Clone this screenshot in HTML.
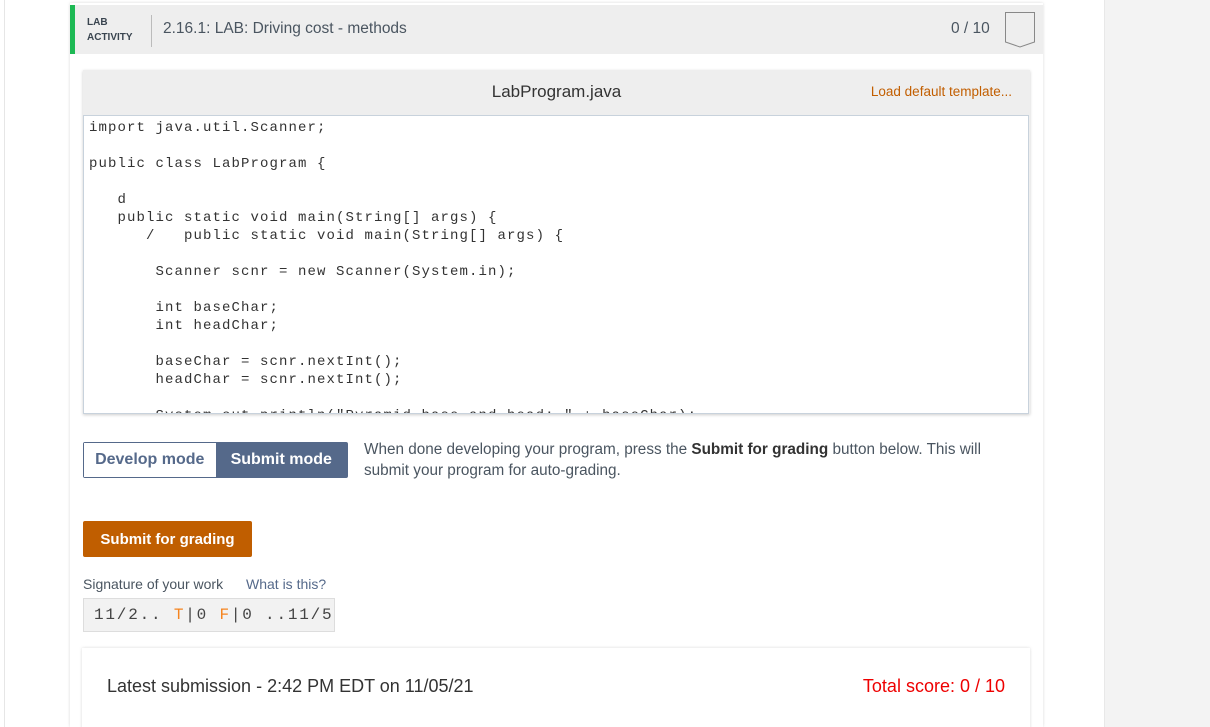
<!DOCTYPE html>
<html style="overflow:hidden"><head><meta charset="utf-8"><style>
*{box-sizing:border-box;margin:0;padding:0}
html,body{width:1210px;height:727px;overflow:hidden}
body{background:#fff;font-family:"Liberation Sans",sans-serif;color:#333;position:relative}
.lstrip{position:absolute;left:4px;top:0;width:1px;height:727px;background:#e6e6e6}
.rgray{position:absolute;left:1104px;top:0;width:106px;height:727px;background:#f3f3f3;border-left:1px solid #e8e8e8}
.card{position:absolute;left:70px;top:3px;width:973px;height:724px;background:#fff;box-shadow:0 0 3px rgba(0,0,0,.15)}
.hdr{position:absolute;left:0;top:2px;width:973px;height:49px;background:#eeeeee;border-left:5px solid #1db954}
.lab{position:absolute;left:12px;top:10px;font-size:10px;font-weight:bold;color:#3a4550;line-height:15px}
.sep{position:absolute;left:76px;top:10px;width:1px;height:32px;background:#bbb}
.title{position:absolute;left:88px;top:15px;font-size:15.5px;color:#4a5560}
.score{position:absolute;left:876px;top:15px;font-size:15.5px;color:#4a5560}
.ed{position:absolute;left:13px;top:67px;width:947px;height:344px;background:#eee;box-shadow:0 1px 3px rgba(0,0,0,.2)}
.fn{position:absolute;left:0;width:947px;top:12px;text-align:center;font-size:17px;color:#333}
.ld{position:absolute;right:18px;top:14px;font-size:13.5px;color:#c25e00}
.code{position:absolute;left:0;top:45px;width:946px;height:299px;background:#fff;border:1px solid #c8d2dc;overflow:hidden}
pre{font-family:"Liberation Mono",monospace;font-size:14px;letter-spacing:1.1px;line-height:18px;color:#333;padding:3px 0 0 5px}
.modes{position:absolute;left:13px;top:439px;width:265px;height:36px;border:1px solid #55698a;border-radius:2px;display:flex;font-weight:bold;font-size:16px}
.modes div{flex:1;display:flex;align-items:center;justify-content:center}
.dev{color:#55698a;background:#fff}
.sub{color:#fff;background:#55698a}
.desc{position:absolute;left:294px;top:436px;font-size:15.3px;line-height:21px;color:#4a5560;width:640px}
.sfg{position:absolute;left:13px;top:518px;width:169px;height:36px;background:#c05e00;color:#fff;font-weight:bold;font-size:15px;display:flex;align-items:center;justify-content:center;border-radius:2px}
.sig{position:absolute;left:13px;top:573px;font-size:14px;color:#4a5560}
.wit{position:absolute;left:176px;top:573px;font-size:14px;color:#55698a}
.sigbox{position:absolute;left:13px;top:595px;width:252px;height:34px;background:#f2f2f2;border:1px solid #ddd;font-family:"Liberation Mono",monospace;font-size:16px;color:#444;padding:7px 0 0 10px;letter-spacing:1.8px}
.o{color:#f5841f}
.latest{position:absolute;left:12px;top:645px;width:948px;height:100px;background:#fff;box-shadow:0 0 3px rgba(0,0,0,.15)}
.lt{position:absolute;left:25px;top:28px;font-size:18px;color:#333}
.ts{position:absolute;right:25px;top:28px;font-size:18px;color:#e00}
</style></head><body>
<div class="lstrip"></div>
<div class="rgray"></div>
<div class="card">
 <div class="hdr">
  <div class="lab">LAB<br>ACTIVITY</div>
  <div class="sep"></div>
  <div class="title">2.16.1: LAB: Driving cost - methods</div>
  <div class="score">0 / 10</div>
  <svg style="position:absolute;left:927px;top:4px" width="34" height="40"><path d="M3.5 3.5H32.5V33L18 38L3.5 33Z" fill="none" stroke="#888" stroke-width="1"/></svg>
 </div>
 <div class="ed">
  <div class="fn">LabProgram.java</div>
  <div class="ld">Load default template...</div>
  <div class="code"><pre>import java.util.Scanner;

public class LabProgram {

   d
   public static void main(String[] args) {
      /   public static void main(String[] args) {

       Scanner scnr = new Scanner(System.in);

       int baseChar;
       int headChar;

       baseChar = scnr.nextInt();
       headChar = scnr.nextInt();

       System.out.println("Pyramid base and head: " + baseChar);</pre></div>
 </div>
 <div class="modes"><div class="dev">Develop mode</div><div class="sub">Submit mode</div></div>
 <div class="desc">When done developing your program, press the <b style="color:#333">Submit for grading</b> button below. This will submit your program for auto-grading.</div>
 <div class="sfg">Submit for grading</div>
 <div class="sig">Signature of your work</div>
 <div class="wit">What is this?</div>
 <div class="sigbox">11/2.. <span class="o">T</span>|0 <span class="o">F</span>|0 ..11/5</div>
 <div class="latest">
  <div class="lt">Latest submission - 2:42 PM EDT on 11/05/21</div>
  <div class="ts">Total score: 0 / 10</div>
 </div>
</div>
</body></html>
